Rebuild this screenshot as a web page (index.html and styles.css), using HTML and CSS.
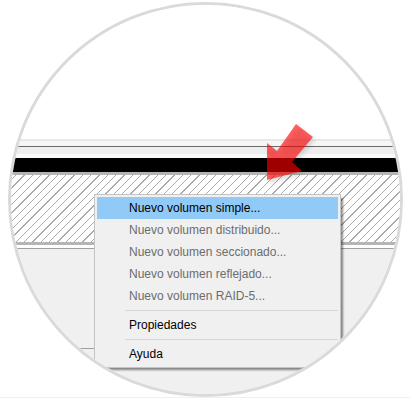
FILE: index.html
```html
<!DOCTYPE html>
<html lang="es">
<head>
    <meta charset="UTF-8">
    <meta name="viewport" content="width=device-width, initial-scale=1.0">
    <title>Administración de discos - Nuevo volumen</title>
    <link rel="stylesheet" href="styles.css">
</head>
<body>
    <!-- Lupa circular sobre el administrador de discos -->
    <div class="lens">
        <div class="canvas">
            <div class="blank"></div>
            <div class="rule-light"></div>
            <div class="gap"></div>
            <div class="rule-dark"></div>
            <div class="band"></div>
            <div class="band-soft"></div>
            <div class="disk-bar"></div>
            <div class="edge"></div>
            <div class="hatch"></div>
            <div class="edge"></div>
            <div class="gap-white"></div>
            <div class="pane"></div>
            <div class="pane-rest"></div>

            <!-- Flecha roja -->
            <svg class="arrow" width="60" height="70" viewBox="260 118 60 70">
                <polygon points="267,180 267,143 277,151 296,124 313,137 292,162 302,171" fill="rgba(255,0,0,0.62)"/>
            </svg>

            <!-- Menú contextual -->
            <div class="context-menu">
                <div class="menu-item active">Nuevo volumen simple...</div>
                <div class="menu-item disabled">Nuevo volumen distribuido...</div>
                <div class="menu-item disabled">Nuevo volumen seccionado...</div>
                <div class="menu-item disabled">Nuevo volumen reflejado...</div>
                <div class="menu-item disabled">Nuevo volumen RAID-5...</div>
                <div class="menu-sep"></div>
                <div class="menu-item">Propiedades</div>
                <div class="menu-sep"></div>
                <div class="menu-item">Ayuda</div>
            </div>
        </div>
    </div>
    <div class="base-line"></div>
</body>
</html>
```

FILE: styles.css
```css
* {
    margin: 0;
    padding: 0;
    box-sizing: border-box;
}

body {
    background: #fff;
    font-family: 'Liberation Sans', Arial, sans-serif;
    width: 410px;
    height: 399px;
    overflow: hidden;
}

.lens {
    width: 395px;
    height: 395px;
    margin: 2px 0 0 8px;
    border: 3px solid #dadada;
    border-radius: 50%;
    overflow: hidden;
    position: relative;
    background: #fff;
}

.canvas {
    position: relative;
    width: 410px;
    height: 399px;
    margin: -5px 0 0 -11px;
}

.blank {
    height: 139px;
    background: #fff;
}

.rule-light {
    height: 2px;
    background: #e8e8e8;
}

.gap {
    height: 5px;
    background: #f6f6f6;
}

.rule-dark {
    height: 1px;
    background: #6a6a6a;
}

.band {
    height: 7px;
    background: #eeeeee;
}

.band-soft {
    height: 4px;
    background: #f9f9f9;
}

.disk-bar {
    height: 14px;
    background: #000;
}

.edge {
    height: 3px;
    background: #b5b5b5;
}

.hatch {
    height: 67px;
    background: repeating-linear-gradient(135deg, #fff 0 5px, #aaa 5px 5.9px);
}

.gap-white {
    height: 4px;
    background: #fff;
    border-bottom: 1px solid #a0a0a0;
}

.pane {
    height: 100px;
    background: #f0f0f0;
    border-bottom: 1px solid #a0a0a0;
}

.pane-rest {
    height: 60px;
    background: #f0f0f0;
}

.arrow {
    position: absolute;
    left: 260px;
    top: 118px;
    filter: drop-shadow(2px 3px 2px rgba(0,0,0,0.22));
}

.context-menu {
    position: absolute;
    left: 94px;
    top: 194px;
    width: 247px;
    padding: 2px;
    background: #f0f0f0;
    border: 1px solid #c4c4c4;
    box-shadow: 3px 3px 2px -1px rgba(0,0,0,0.45);
    font-size: 12px;
}

.menu-item {
    height: 22px;
    line-height: 22px;
    padding-left: 32px;
    color: #000;
    white-space: nowrap;
}

.menu-item.active {
    background: #91c9f7;
}

.menu-item.disabled {
    color: #6d6d6d;
}

.menu-sep {
    height: 1px;
    margin: 3px 0 3px 28px;
    background: #d7d7d7;
}

.base-line {
    height: 1px;
    background: #f0f0f0;
}
```
